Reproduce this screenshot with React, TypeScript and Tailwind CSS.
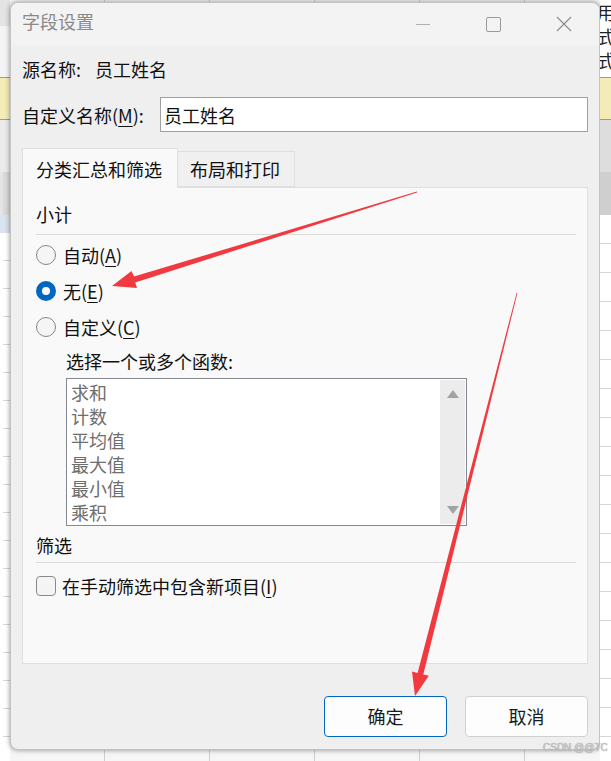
import React from "react";

const funcs = ["求和", "计数", "平均值", "最大值", "最小值", "乘积"];

function Radio({ checked, label, hot }: { checked?: boolean; label: string; hot: string }) {
  return (
    <div className="flex h-[36px] items-center">
      {checked ? (
        <span className="flex h-[20px] w-[20px] items-center justify-center rounded-full bg-[#0067c0]">
          <span className="h-[8px] w-[8px] rounded-full bg-white" />
        </span>
      ) : (
        <span className="h-[20px] w-[20px] rounded-full border border-[#858585] bg-[#f5f5f5]" />
      )}
      <span className="ml-[7px] leading-[24px]">
        {label}(<span className="underline underline-offset-[3px]">{hot}</span>)
      </span>
    </div>
  );
}

function LeftStrip() {
  return (
    <div className="flex w-[10px] shrink-0 flex-col">
      <div className="h-[26px] bg-[#e4e4e4]" />
      <div className="h-[51px] bg-[#f4f4f4]" />
      <div className="h-[43px] border-y border-[#c79a2a] bg-[#f3ecb7]" />
      <div className="h-[52px] bg-[#ebebeb]" />
      <div className="h-[43px] border-l-[3px] border-[#e4e4e4] bg-[#d9d9d9]" />
      <div className="h-[18px] bg-[#d9e4f0]" />
      <div className="flex-1 border-l-[3px] border-[#ffffff] bg-[repeating-linear-gradient(to_bottom,#ffffff_0px,#ffffff_27px,#d6d6d6_27px,#d6d6d6_28px)]" />
    </div>
  );
}

function RightStrip() {
  return (
    <div className="flex flex-1 flex-col">
      <div className="h-[77px] overflow-hidden bg-white pl-[3px]">
        <div className="-ml-[6px] text-[18px] leading-[24px] text-[#222]">用</div>
        <div className="-ml-[6px] text-[18px] leading-[24px] text-[#222]">式</div>
        <div className="-ml-[6px] text-[18px] leading-[24px] text-[#222]">式</div>
      </div>
      <div className="h-[43px] border-y border-[#c79a2a] bg-[#f3ecb7]" />
      <div className="h-[52px] bg-[#dddddd]" />
      <div className="h-[43px] bg-[#cfcfcf]" />
      <div className="flex-1 bg-[repeating-linear-gradient(to_bottom,#ffffff_0px,#ffffff_28px,#d6d6d6_28px,#d6d6d6_29px)]" />
    </div>
  );
}

function Dialog() {
  return (
    <div className="mt-[2px] flex h-[748px] w-[590px] shrink-0 flex-col overflow-hidden rounded-[8px] border border-[#c4c4c4] bg-[#efefef] shadow-[0_0_5px_rgba(0,0,0,0.45)]">
      <div className="flex h-[42px] shrink-0 items-center bg-[#f3f3f3] pb-[5px] pl-[11px]">
        <span className="text-[#8a8a8a]">字段设置</span>
        <span className="ml-auto mr-[56px] mt-[5px] h-px w-[14px] bg-[#b0b0b0]" />
        <span className="mr-[55px] mt-[5px] h-[15px] w-[15px] rounded-[2px] border border-[#9a9a9a]" />
        <svg width="16" height="16" viewBox="0 0 16 16" className="mr-[27px] mt-[5px]">
          <path d="M1 1 L15 15 M15 1 L1 15" stroke="#8a8a8a" strokeWidth="1.1" />
        </svg>
      </div>

      <div className="flex flex-1 flex-col px-[11px]">
        <div className="mt-[12px] flex h-[24px] items-center leading-[24px]">
          <span className="w-[73px]">源名称:</span>
          <span>员工姓名</span>
        </div>

        <div className="mt-[16px] flex h-[35px] items-center">
          <span className="w-[138px] leading-[24px]">
            自定义名称(<span className="underline underline-offset-[3px]">M</span>):
          </span>
          <div className="flex h-[35px] flex-1 items-center border border-[#a0a0a0] bg-white pl-[3px] leading-[24px]">
            员工姓名
          </div>
        </div>

        <div className="mt-[16px] flex h-[39px] items-end">
          <div className="relative z-10 -mb-px flex h-[40px] w-[156px] items-center border border-b-0 border-[#dfdfdf] bg-[#f9f9f9] pl-[13px] leading-[24px]">
            分类汇总和筛选
          </div>
          <div className="flex h-[36px] w-[117px] items-center border border-l-0 border-[#dfdfdf] bg-[#f0f0f0] pl-[12px] leading-[24px]">
            布局和打印
          </div>
        </div>

        <div className="flex h-[477px] flex-col border border-[#dfdfdf] bg-[#f9f9f9] pl-[13px] pr-[11px]">
          <div className="mt-[14px] h-[24px] leading-[24px]">小计</div>
          <div className="mt-[8px] h-px bg-[#dadada]" />
          <div className="mt-[2px]">
            <Radio label="自动" hot="A" />
            <Radio label="无" hot="E" checked />
            <Radio label="自定义" hot="C" />
          </div>
          <div className="ml-[30px] mt-[4px] h-[24px] leading-[24px]">选择一个或多个函数:</div>
          <div className="ml-[30px] mt-[5px] flex h-[148px] w-[401px] border border-[#828790] bg-white">
            <div className="flex-1 pl-[4px] pt-[1px] text-[#6e6e6e]">
              {funcs.map((f) => (
                <div key={f} className="h-[24px] leading-[24px]">
                  {f}
                </div>
              ))}
            </div>
            <div className="my-px mr-px flex w-[25px] flex-col items-center justify-between bg-[#ececec] py-[10px]">
              <svg width="12" height="8" viewBox="0 0 12 8">
                <path d="M6 0 L12 8 L0 8 Z" fill="#a3a3a3" />
              </svg>
              <svg width="12" height="8" viewBox="0 0 12 8">
                <path d="M0 0 L12 0 L6 8 Z" fill="#a3a3a3" />
              </svg>
            </div>
          </div>
          <div className="mt-[7px] h-[24px] leading-[24px]">筛选</div>
          <div className="mt-[5px] h-px bg-[#dadada]" />
          <div className="mt-[11px] flex h-[24px] items-center">
            <span className="h-[20px] w-[20px] rounded-[4px] border border-[#8a8a8a] bg-[#f4f4f4]" />
            <span className="ml-[6px] leading-[24px]">
              在手动筛选中包含新项目(<span className="underline underline-offset-[3px]">I</span>)
            </span>
          </div>
        </div>

        <div className="mt-[32px] flex justify-end gap-[18px]">
          <button className="flex h-[41px] w-[123px] items-center justify-center rounded-[4px] border border-[#0067c0] bg-[#fdfdfd] pb-[2px] leading-[24px] text-[#1a1a1a]">
            确定
          </button>
          <button className="flex h-[41px] w-[123px] items-center justify-center rounded-[4px] border border-[#d0d0d0] bg-[#fdfdfd] pb-[2px] leading-[24px] text-[#1a1a1a]">
            取消
          </button>
        </div>
      </div>
    </div>
  );
}

export default function App() {
  return (
    <div className="relative h-[761px] w-[611px] overflow-hidden bg-[repeating-linear-gradient(to_right,#f6f6f6_0px,#f6f6f6_104px,#d0d0d0_104px,#d0d0d0_105px)] font-['Noto_Sans_CJK_SC','Microsoft_YaHei',sans-serif] text-[18px] text-[#111]">
      <div className="flex h-full">
        <LeftStrip />
        <Dialog />
        <RightStrip />
      </div>

      {/* annotation arrows */}
      <svg className="pointer-events-none absolute inset-0" width="611" height="761" viewBox="0 0 611 761">
        <polygon
          points="416.9,191.6 134.0,276.6 131.5,271.0 112,286 137.0,288.0 135.2,282.4 417.1,192.4"
          fill="#f03a3f"
        />
        <polygon
          points="516.6,292.9 417.6,673.0 412.0,671.5 415,696 428.8,675.8 423.3,674.4 517.4,293.1"
          fill="#f03a3f"
        />
      </svg>

      <div className="absolute left-[543px] top-[742px] text-[10px] leading-[12px] font-['Liberation_Sans',sans-serif] text-[#c8c8c8] [text-shadow:0_0_1px_#888]">
        CSDN @@TC
      </div>
    </div>
  );
}
